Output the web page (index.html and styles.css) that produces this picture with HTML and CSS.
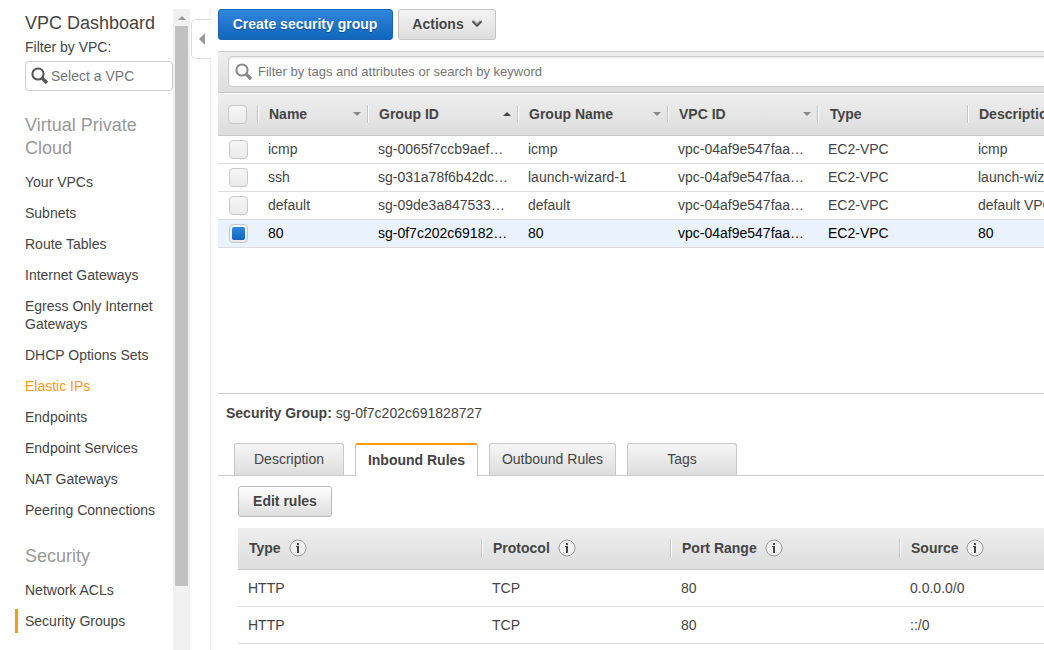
FILE: index.html
```html
<!DOCTYPE html>
<html lang="en">
<head>
  <meta charset="UTF-8" />
  <title>VPC Management Console</title>
  <link rel="stylesheet" href="styles.css">
</head>
<body>

<div class="console">
  <nav class="sidebar">
    <div class="dash-title">VPC Dashboard</div>
    <div class="filter-label">Filter by VPC:</div>
    <div class="vpc-select">
      <svg class="search-icon" width="18" height="18" viewBox="0 0 18 18"><circle cx="7" cy="7" r="5.6" fill="none" stroke="currentColor" stroke-width="2"/><path d="M11.3 11.3L16 16" stroke="currentColor" stroke-width="3.4"/></svg>
      <span>Select a VPC</span>
    </div>

    <h2>Virtual Private Cloud</h2>
    <ul>
      <li>Your VPCs</li>
      <li>Subnets</li>
      <li>Route Tables</li>
      <li>Internet Gateways</li>
      <li>Egress Only Internet Gateways</li>
      <li>DHCP Options Sets</li>
      <li class="hover">Elastic IPs</li>
      <li>Endpoints</li>
      <li>Endpoint Services</li>
      <li>NAT Gateways</li>
      <li>Peering Connections</li>
    </ul>

    <h2>Security</h2>
    <ul>
      <li>Network ACLs</li>
      <li class="active">Security Groups</li>
    </ul>
  </nav>

  <div class="scrollbar">
    <div class="scroll-up"></div>
    <div class="scroll-thumb"></div>
  </div>

  <div class="gutter">
    <div class="gutter-top"></div>
    <div class="collapse"><div class="arrow-left"></div></div>
    <div class="gutter-line"></div>
  </div>

  <main class="main">
    <div class="actions">
      <button class="btn primary">Create security group</button>
      <button class="btn">Actions
        <svg width="10" height="8" viewBox="0 0 10 8"><path d="M0 0.5H2.5L5 3L7.5 0.5H10V2L5 7L0 2Z" fill="#999"/><path d="M0.5 1.5L5 6L9.5 1.5" fill="none" stroke="#444" stroke-width="1.3"/></svg>
      </button>
    </div>

    <div class="toolbar">
      <div class="search">
        <svg class="search-icon" width="18" height="18" viewBox="0 0 18 18"><circle cx="7" cy="7" r="5.6" fill="none" stroke="currentColor" stroke-width="2"/><path d="M11.3 11.3L16 16" stroke="currentColor" stroke-width="3.4"/></svg>
        <span>Filter by tags and attributes or search by keyword</span>
      </div>
    </div>

    <div class="groups">
      <div class="row head">
        <div class="check-cell"><div class="check"></div></div>
        <div class="th">Name<i class="sort"></i></div>
        <div class="th">Group ID<i class="sort asc"></i></div>
        <div class="th">Group Name<i class="sort"></i></div>
        <div class="th">VPC ID<i class="sort"></i></div>
        <div class="th type">Type</div>
        <div class="th">Description</div>
      </div>
      <div class="row">
        <div class="check-cell"><div class="check"></div></div>
        <div>icmp</div><div>sg-0065f7ccb9aef…</div><div>icmp</div><div>vpc-04af9e547faa…</div><div>EC2-VPC</div><div>icmp</div>
      </div>
      <div class="row">
        <div class="check-cell"><div class="check"></div></div>
        <div>ssh</div><div>sg-031a78f6b42dc…</div><div>launch-wizard-1</div><div>vpc-04af9e547faa…</div><div>EC2-VPC</div><div>launch-wizard-1</div>
      </div>
      <div class="row">
        <div class="check-cell"><div class="check"></div></div>
        <div>default</div><div>sg-09de3a847533…</div><div>default</div><div>vpc-04af9e547faa…</div><div>EC2-VPC</div><div>default VPC</div>
      </div>
      <div class="row selected">
        <div class="check-cell"><div class="check on"></div></div>
        <div>80</div><div>sg-0f7c202c69182…</div><div>80</div><div>vpc-04af9e547faa…</div><div>EC2-VPC</div><div>80</div>
      </div>
    </div>

    <section class="details">
      <div class="details-title"><b>Security Group:</b> sg-0f7c202c691828727</div>
      <div class="tabs">
        <div class="tab w110">Description</div>
        <div class="tab current">Inbound Rules</div>
        <div class="tab w127">Outbound Rules</div>
        <div class="tab w110">Tags</div>
      </div>
      <div class="panel">
        <button class="btn edit">Edit rules</button>
        <div class="rules">
          <div class="rule rule-head">
            <div>Type <svg class="info" width="18" height="18" viewBox="0 0 18 18"><circle cx="9" cy="9" r="8" fill="#f2f2f2" stroke="#999"/><path d="M8 4h2v2H8zM7 7H10V14H8V8H7z" fill="#444"/></svg></div>
            <div>Protocol <svg class="info" width="18" height="18" viewBox="0 0 18 18"><circle cx="9" cy="9" r="8" fill="#f2f2f2" stroke="#999"/><path d="M8 4h2v2H8zM7 7H10V14H8V8H7z" fill="#444"/></svg></div>
            <div>Port Range <svg class="info" width="18" height="18" viewBox="0 0 18 18"><circle cx="9" cy="9" r="8" fill="#f2f2f2" stroke="#999"/><path d="M8 4h2v2H8zM7 7H10V14H8V8H7z" fill="#444"/></svg></div>
            <div>Source <svg class="info" width="18" height="18" viewBox="0 0 18 18"><circle cx="9" cy="9" r="8" fill="#f2f2f2" stroke="#999"/><path d="M8 4h2v2H8zM7 7H10V14H8V8H7z" fill="#444"/></svg></div>
          </div>
          <div class="rule"><div>HTTP</div><div>TCP</div><div>80</div><div>0.0.0.0/0</div></div>
          <div class="rule"><div>HTTP</div><div>TCP</div><div>80</div><div>::/0</div></div>
        </div>
      </div>
    </section>
  </main>
</div>

</body>
</html>
```
FILE: styles.css
```css
* { box-sizing: border-box; }
body {
  margin: 0;
  background: #fff;
  color: #444;
  font-family: "Liberation Sans", Arial, sans-serif;
  font-size: 14px;
  line-height: 18px;
  overflow: hidden;
}
.console {
  display: flex;
  height: 650px;
  padding-top: 9px;
  overflow: hidden;
}

/* sidebar */
.sidebar {
  width: 173px;
  flex: none;
  padding-left: 15px;
}
.dash-title {
  font-size: 18px;
  line-height: 24px;
  padding: 2px 0 0 10px;
  white-space: nowrap;
}
.filter-label {
  margin: 3px 0 5px 10px;
}
.vpc-select {
  display: flex;
  align-items: center;
  gap: 2px;
  height: 30px;
  margin-left: 10px;
  padding-left: 5px;
  border: 1px solid #ccc;
  border-radius: 4px;
  color: #757575;
}
.search-icon { color: #555; }
.sidebar h2 {
  margin: 23px 0 10px 10px;
  color: #999;
  font-size: 18px;
  font-weight: normal;
  line-height: 23px;
}
.sidebar ul {
  display: flex;
  flex-direction: column;
  gap: 7px;
  margin: 0;
  padding: 0;
  list-style: none;
}
.sidebar li {
  padding: 3px 0 3px 7px;
  border-left: 3px solid transparent;
}
.sidebar li.hover { color: #ff9914; }
.sidebar li.active { border-left-color: #ff9914; }

.scrollbar {
  width: 17px;
  flex: none;
  background: #f1f1f1;
  padding: 0 2px;
}
.scroll-up {
  height: 17px;
  display: flex;
  align-items: center;
  justify-content: center;
}
.scroll-up::before {
  content: "";
  border: 4px solid transparent;
  border-top: 0;
  border-bottom-color: #999;
}
.scroll-thumb {
  height: 560px;
  background: #c1c1c1;
}

/* strip with the collapse handle */
.gutter {
  display: flex;
  flex-direction: column;
  width: 21px;
  flex: none;
  padding-left: 1px;
}
.gutter-top {
  height: 10px;
  border-right: 1px solid #eee;
}
.collapse {
  height: 40px;
  display: flex;
  align-items: center;
  padding-left: 7px;
  border: 1px solid #ddd;
  border-right: 0;
  border-radius: 5px 0 0 5px;
}
.arrow-left {
  border: 6px solid transparent;
  border-left: 0;
  border-right-color: #999;
}
.gutter-line {
  flex: 1;
  border-right: 1px solid #eee;
}

/* main */
.main {
  display: flex;
  flex-direction: column;
  flex: 1;
  min-width: 0;
  margin-left: 7px;
  overflow: hidden;
}
.actions {
  display: flex;
  gap: 5px;
  margin-bottom: 11px;
}
.btn {
  display: flex;
  align-items: center;
  justify-content: center;
  gap: 8px;
  width: 98px;
  height: 31px;
  padding: 0 0 1px;
  border: 1px solid #c4c4c4;
  border-radius: 3px;
  background: linear-gradient(#f4f4f4, #ddd);
  color: #444;
  font: bold 14px "Liberation Sans", Arial, sans-serif;
  text-shadow: 0 1px 0 #fff;
  white-space: nowrap;
}
.btn.primary {
  width: 175px;
  padding-right: 1px;
  border-color: #1763b5;
  background: linear-gradient(#2f86dd, #1166bb);
  color: #fff;
  text-shadow: 0 1px 1px #0d4d90;
}
.toolbar {
  height: 42px;
  padding: 4px 0 0 10px;
  border-top: 1px solid #ccc;
  border-bottom: 1px solid #c4c4c4;
  background: linear-gradient(#eee, #ddd);
}
.search {
  display: flex;
  align-items: center;
  gap: 5px;
  height: 31px;
  margin-right: -6px;
  padding-left: 6px;
  border: 1px solid #ccc;
  border-radius: 4px;
  background: #fff;
  box-shadow: inset 0 1px 3px #e4e4e4;
  color: #757575;
  font-size: 13px;
}
.search .search-icon { color: #888; }

.row {
  display: grid;
  grid-template-columns: 39px 110px 150px 150px 150px 150px 150px;
  align-items: center;
  width: 899px;
  height: 28px;
  border-bottom: 1px solid #ddd;
}
.row > div {
  margin-bottom: 1px;
  padding-left: 11px;
  white-space: nowrap;
}
.row > .check-cell { margin-bottom: 0; }
.row.head {
  height: 43px;
  border-top: 1px solid #fff;
  border-bottom-color: #c8c8c8;
  background: linear-gradient(#eee, #ddd);
  font-weight: bold;
}
.row.head .check-cell { padding-left: 10px; }
.row.selected {
  background: #eaf2fe;
  color: #000;
}
.row > .th {
  display: flex;
  align-items: center;
  justify-content: space-between;
  padding-right: 6px;
  border-left: 1px solid #c4c4c4;
  box-shadow: inset 1px 0 #fff;
}
.row > .th.type { padding-left: 12px; }
.sort {
  border: 4px solid transparent;
  border-top-color: #888;
  border-bottom: 0;
}
.sort.asc {
  border-top: 0;
  border-bottom: 4px solid #444;
}
.check {
  display: flex;
  align-items: center;
  justify-content: center;
  width: 19px;
  height: 19px;
  border: 1px solid #c8c8c8;
  border-radius: 4px;
  background: linear-gradient(#f6f6f6, #eaeaea);
}
.check.on::before {
  content: "";
  width: 13px;
  height: 13px;
  border-radius: 2px;
  background: linear-gradient(#2f86dd, #1166bb);
}

/* details pane */
.details {
  margin-top: 145px;
  border-top: 1px solid #ccc;
}
.details-title {
  padding: 10px 0 0 8px;
}
.tabs {
  display: flex;
  gap: 11px;
  height: 33px;
  margin-top: 21px;
  padding-left: 16px;
  border-bottom: 1px solid #ccc;
}
.tab {
  height: 32px;
  padding-top: 6px;
  border: 1px solid #c8c8c8;
  border-bottom: 0;
  border-radius: 3px 3px 0 0;
  background: linear-gradient(#f6f6f6, #ddd);
  text-align: center;
}
.w110 { width: 110px; }
.w127 { width: 127px; }
.tab.current {
  width: 123px;
  height: 33px;
  border-top: 2px solid #ff9900;
  background: #fff;
  font-weight: bold;
}
.panel { padding: 10px 0 0 20px; }
.btn.edit {
  width: 94px;
  border-color: #bbb;
  background: linear-gradient(#fff, #ddd);
}
.rules { margin-top: 11px; }
.rule {
  display: grid;
  grid-template-columns: 243px 189px 229px 241px;
  align-items: center;
  width: 902px;
  height: 37px;
  border-bottom: 1px solid #ddd;
}
.rule > div { padding-left: 10px; }
.rule > div:nth-child(n+2) { padding-left: 11px; }
.rule-head {
  height: 42px;
  border-bottom-color: #c8c8c8;
  background: linear-gradient(#eee, #ddd);
  font-weight: bold;
}
.rule-head > div {
  display: flex;
  align-items: center;
  gap: 8px;
  height: 19px;
  padding-bottom: 1px;
}
.rule-head > div:first-child { padding-left: 11px; }
.rule-head > div:nth-child(n+2) {
  border-left: 1px solid #c4c4c4;
  box-shadow: inset 1px 0 #fff;
}
```
